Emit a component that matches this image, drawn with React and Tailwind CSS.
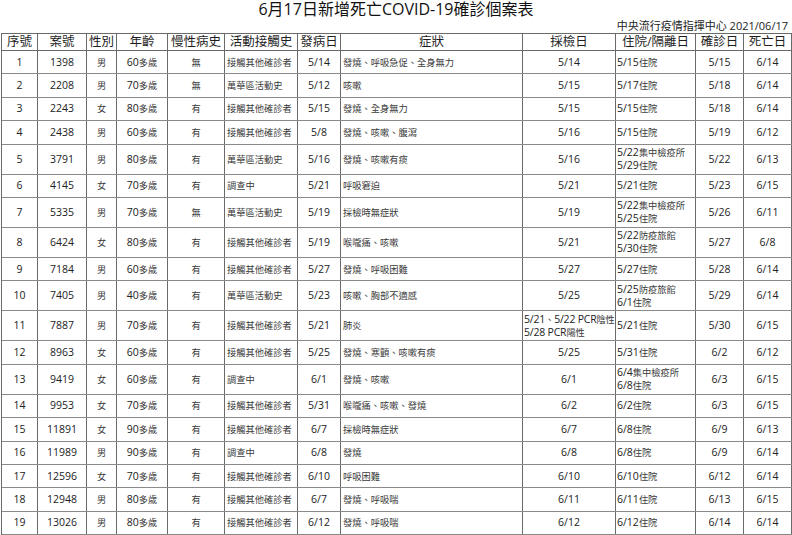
import React from "react";

const rows = [
  ["1", "1398", "男", "60多歲", "無", "接觸其他確診者", "5/14", "發燒、呼吸急促、全身無力", "5/14", "5/15住院", "5/15", "6/14"],
  ["2", "2208", "男", "70多歲", "無", "萬華區活動史", "5/12", "咳嗽", "5/15", "5/17住院", "5/18", "6/14"],
  ["3", "2243", "女", "80多歲", "有", "接觸其他確診者", "5/15", "發燒、全身無力", "5/15", "5/15住院", "5/18", "6/14"],
  ["4", "2438", "男", "60多歲", "有", "接觸其他確診者", "5/8", "發燒、咳嗽、腹瀉", "5/16", "5/15住院", "5/19", "6/12"],
  ["5", "3791", "男", "80多歲", "有", "萬華區活動史", "5/16", "發燒、咳嗽有痰", "5/16", "5/22集中檢疫所|5/29住院", "5/22", "6/13"],
  ["6", "4145", "女", "70多歲", "有", "調查中", "5/21", "呼吸窘迫", "5/21", "5/21住院", "5/23", "6/15"],
  ["7", "5335", "男", "70多歲", "無", "萬華區活動史", "5/19", "採檢時無症狀", "5/19", "5/22集中檢疫所|5/25住院", "5/26", "6/11"],
  ["8", "6424", "女", "80多歲", "有", "接觸其他確診者", "5/19", "喉嚨痛、咳嗽", "5/21", "5/22防疫旅館|5/30住院", "5/27", "6/8"],
  ["9", "7184", "男", "60多歲", "有", "接觸其他確診者", "5/27", "發燒、呼吸困難", "5/27", "5/27住院", "5/28", "6/14"],
  ["10", "7405", "男", "40多歲", "有", "萬華區活動史", "5/23", "咳嗽、胸部不適感", "5/25", "5/25防疫旅館|6/1住院", "5/29", "6/14"],
  ["11", "7887", "男", "70多歲", "有", "接觸其他確診者", "5/21", "肺炎", "5/21、5/22 PCR陰性|5/28 PCR陽性", "5/21住院", "5/30", "6/15"],
  ["12", "8963", "女", "60多歲", "有", "接觸其他確診者", "5/25", "發燒、寒顫、咳嗽有痰", "5/25", "5/31住院", "6/2", "6/12"],
  ["13", "9419", "女", "60多歲", "有", "調查中", "6/1", "發燒、咳嗽", "6/1", "6/4集中檢疫所|6/8住院", "6/3", "6/15"],
  ["14", "9953", "女", "70多歲", "有", "接觸其他確診者", "5/31", "喉嚨痛、咳嗽、發燒", "6/2", "6/2住院", "6/3", "6/15"],
  ["15", "11891", "女", "90多歲", "有", "接觸其他確診者", "6/7", "採檢時無症狀", "6/7", "6/8住院", "6/9", "6/13"],
  ["16", "11989", "男", "90多歲", "有", "調查中", "6/8", "發燒", "6/8", "6/8住院", "6/9", "6/14"],
  ["17", "12596", "女", "70多歲", "有", "接觸其他確診者", "6/10", "呼吸困難", "6/10", "6/10住院", "6/12", "6/14"],
  ["18", "12948", "男", "80多歲", "有", "接觸其他確診者", "6/7", "發燒、呼吸喘", "6/11", "6/11住院", "6/13", "6/15"],
  ["19", "13026", "男", "80多歲", "有", "接觸其他確診者", "6/12", "發燒、呼吸喘", "6/12", "6/12住院", "6/14", "6/14"],
];

const headers = ["序號", "案號", "性別", "年齡", "慢性病史", "活動接觸史", "發病日", "症狀", "採檢日", "住院/隔離日", "確診日", "死亡日"];

const GRID = "grid grid-cols-[36px_49px_30px_51px_57px_73px_43px_182px_93px_80px_48px_48px]";

function Mixed({ text }) {
  const parts = text.match(/[\u3000-\u9fff\uff00-\uffef]+|[^\u3000-\u9fff\uff00-\uffef]+/g) || [];
  return (
    <>
      {parts.map((p, i) =>
        /[\u3000-\u9fff\uff00-\uffef]/.test(p) ? (
          <span key={i} className="text-[9.25px] text-[#3a3a3a]">{p}</span>
        ) : (
          <span key={i}>{p}</span>
        )
      )}
    </>
  );
}

function Cell({ text, col }) {
  const left = col === 5 || col === 7 || col === 9 || (col === 8 && text.includes("|"));
  const pad = col === 5 || col === 7 ? "pl-[2px]" : left ? "pl-[1px]" : "";
  const lines = text.split("|");
  return (
    <div
      className={
        "flex flex-col justify-center border-r border-[#6a6a6a] leading-[13px] whitespace-nowrap " +
        (left ? "items-start " : "items-center ") +
        (col === 8 && left ? "tracking-[-0.2px] " : "") +
        pad
      }
    >
      {lines.map((l, i) => (
        <div key={i}>
          <Mixed text={l} />
        </div>
      ))}
    </div>
  );
}

export default function App() {
  return (
    <div className="w-[792px] h-[535px] bg-white overflow-hidden font-['Open_Sans','Noto_Sans_CJK_TC',sans-serif] text-[#222]">
      <div className="h-[19px] text-center text-[16px] leading-[19px] text-[#111]">6月17日新增死亡COVID-19確診個案表</div>
      <div className="h-[13px] text-right pr-[4px] text-[11px] leading-[13px] text-[#222]">中央流行疫情指揮中心 2021/06/17</div>
      <div className="mt-[1px] ml-[1px] w-[791px] border-l border-t border-[#6a6a6a]">
        <div className={GRID + " h-[17px] border-b border-[#6a6a6a]"}>
          {headers.map((h, i) => (
            <div key={i} className="flex items-center justify-center border-r border-[#6a6a6a] text-[12.5px] leading-[14px] text-[#1e1e1e] whitespace-nowrap">
              {h}
            </div>
          ))}
        </div>
        {rows.map((r, ri) => {
          const dbl = r.some((c) => c.includes("|"));
          return (
            <div key={ri} className={GRID + " border-b border-[#8a8a8a] text-[10.5px] " + (dbl ? "h-[30px]" : "h-[23.4px]")}>
              {r.map((c, ci) => (
                <Cell key={ci} text={c} col={ci} />
              ))}
            </div>
          );
        })}
      </div>
    </div>
  );
}
